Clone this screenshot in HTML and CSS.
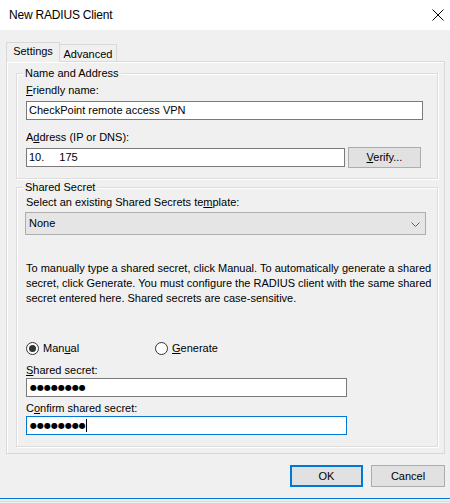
FILE: index.html
```html
<!DOCTYPE html>
<html>
<head>
<meta charset="utf-8">
<title>New RADIUS Client</title>
<link rel="stylesheet" href="styles.css">
</head>
<body>
<div class="titlebar">
  <span class="title">New RADIUS Client</span>
  <svg class="close" width="12" height="12" viewBox="0 0 12 12"><path d="M0.5 0.5 L11.5 11.5 M11.5 0.5 L0.5 11.5" stroke="#000" stroke-width="1" fill="none"/></svg>
</div>
<div class="tabs">
  <div class="tab active">Settings</div>
  <div class="tab second">Advanced</div>
</div>
<div class="panel">
  <div class="group g1">
    <div class="legend">Name and Address</div>
    <div class="label mt2"><u>F</u>riendly name:</div>
    <div class="input friendly">CheckPoint remote access VPN</div>
    <div class="label mt10">A<u>d</u>dress (IP or DNS):</div>
    <div class="addr-row">
      <div class="input address">10.<span class="ip-gap">175</span></div>
      <div class="button verify"><u>V</u>erify...</div>
    </div>
  </div>
  <div class="group g2">
    <div class="legend">Shared Secret</div>
    <div class="label">Select an existing Shared Secrets te<u>m</u>plate:</div>
    <div class="select">
      <span>None</span>
      <svg class="chev" width="9" height="5" viewBox="0 0 9 5"><path d="M0.5 0.5 L4.5 4.5 L8.5 0.5" stroke="#606060" stroke-width="1" fill="none"/></svg>
    </div>
    <p class="info">To manually type a shared secret, click Manual. To automatically generate a shared<br>secret, click Generate. You must configure the RADIUS client with the same shared<br>secret entered here. Shared secrets are case-sensitive.</p>
    <div class="radio-row">
      <label class="radio-item first"><span class="radio checked"></span><span>Man<u>u</u>al</span></label>
      <label class="radio-item"><span class="radio"></span><span><u>G</u>enerate</span></label>
    </div>
    <div class="label mt7"><u>S</u>hared secret:</div>
    <div class="input secret"><span class="dots">●●●●●●●●</span></div>
    <div class="label mt4">C<u>o</u>nfirm shared secret:</div>
    <div class="input secret focused"><span class="dots">●●●●●●●●</span><span class="caret"></span></div>
  </div>
</div>
<div class="footer">
  <div class="button ok">OK</div>
  <div class="button cancel">Cancel</div>
</div>
<div class="taskline"></div>
<div class="bottomline"></div>
</body>
</html>
```
FILE: styles.css
```css
* { box-sizing: border-box; }
html, body { margin: 0; padding: 0; }
body {
  width: 450px;
  height: 503px;
  overflow: hidden;
  background: #f0f0f0;
  font-family: "Liberation Sans", Arial, sans-serif;
  font-size: 11px;
  line-height: 15px;
  color: #000;
}
u { text-decoration: underline; text-underline-offset: 1px; }

.titlebar {
  height: 30px;
  background: #fff;
  display: flex;
  align-items: center;
  justify-content: space-between;
  padding: 0 6px 0 9px;
}
.title { font-size: 12px; letter-spacing: -0.2px; }
.close { display: block; margin-top: -1px; }

.tabs {
  display: flex;
  align-items: flex-end;
  height: 19px;
  margin: 12px 0 0 6px;
}
.tab {
  border: 1px solid #d9d9d9;
  border-bottom: none;
  background: #f0f0f0;
  text-align: center;
}
.tab.active {
  width: 54px;
  height: 20px;
  padding-top: 1px;
  margin-bottom: -1px;
  position: relative;
  z-index: 1;
}
.tab.second {
  width: 57px;
  height: 17px;
  border-left: none;
  padding-top: 2px;
}

.panel {
  margin: 0 5px 0 6px;
  height: 393px;
  border: 1px solid #d9d9d9;
  box-shadow: inset 1px 1px 0 #fff;
  padding: 11px 6px 0 9px;
}

.group {
  border: 1px solid #dcdcdc;
  box-shadow: inset 1px 1px 0 #fff, 1px 1px 0 #fff;
  padding: 0 0 0 9px;
}
.g1 { height: 106px; }
.g2 { height: 260px; margin-top: 8px; }

.legend {
  width: fit-content;
  margin: -8px 0 0 -3px;
  padding: 0 2px;
  background: #f0f0f0;
}
.label { height: 15px; }
.mt2 { margin-top: 2px; }
.mt4 { margin-top: 4px; }
.mt7 { margin-top: 7px; }
.mt10 { margin-top: 10px; }

.input {
  height: 19px;
  border: 1px solid #7a7a7a;
  background: #fff;
  padding: 0 2px;
  line-height: 17px;
  white-space: nowrap;
  overflow: hidden;
}
.friendly { width: 397px; margin-top: 3px; }
.addr-row {
  display: flex;
  align-items: center;
  gap: 3px;
  height: 21px;
  margin-top: 2px;
}
.address { width: 319px; }
.ip-gap { margin-left: 15px; }

.button {
  height: 21px;
  border: 1px solid #adadad;
  background: #e1e1e1;
  text-align: center;
  line-height: 19px;
}
.verify { width: 73px; }

.select {
  width: 401px;
  height: 23px;
  margin: 2px 0 0 -1px;
  border: 1px solid #adadad;
  background: #e5e5e5;
  display: flex;
  align-items: center;
  justify-content: space-between;
  padding: 0 5px 0 3px;
}
.chev { display: block; margin-top: 1px; }

.info {
  margin: 26px 0 0 0;
  white-space: nowrap;
  line-height: 15px;
}

.radio-row {
  display: flex;
  align-items: center;
  height: 16px;
  margin-top: 34px;
}
.radio-item {
  display: flex;
  align-items: center;
  gap: 4px;
}
.radio-item.first { width: 129px; }
.radio {
  width: 13px;
  height: 13px;
  border: 1px solid #333;
  border-radius: 50%;
  background: #fff;
  display: flex;
  align-items: center;
  justify-content: center;
}
.radio.checked::after {
  content: "";
  width: 7px;
  height: 7px;
  border-radius: 50%;
  background: #333;
}

.secret { width: 321px; display: flex; align-items: center; }
.focused { border-color: #0078d7; }
.dots {
  font-family: "DejaVu Sans", sans-serif;
  font-size: 8px;
  letter-spacing: 0px;
  line-height: 17px;
  padding-left: 1px;
}
.caret {
  width: 1px;
  height: 13px;
  background: #000;
}

.footer {
  display: flex;
  justify-content: flex-end;
  gap: 8px;
  padding-right: 5px;
  margin-top: 11px;
}
.ok, .cancel { height: 22px; line-height: 20px; }
.ok { width: 73px; border: 2px solid #0078d7; line-height: 18px; }
.cancel { width: 74px; }

.taskline { height: 1px; background: #0078d7; margin-top: 11px; }
.bottomline { height: 1px; background: #dadada; margin-top: 2px; }
```
